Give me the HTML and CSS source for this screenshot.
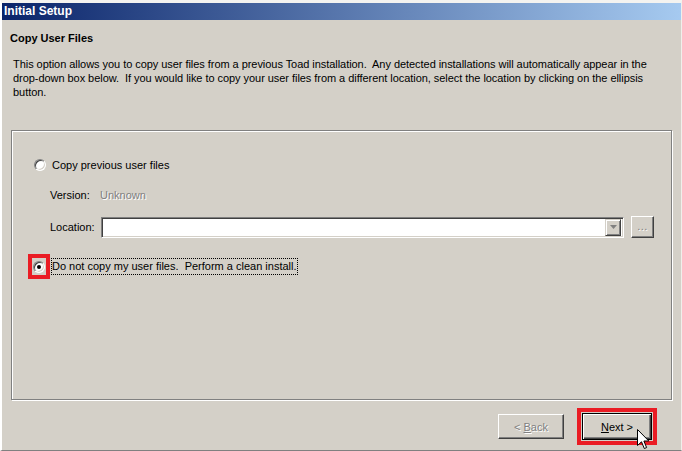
FILE: index.html
```html
<!DOCTYPE html>
<html>
<head>
<meta charset="utf-8">
<title>Initial Setup</title>
<link rel="stylesheet" href="styles.css">
</head>
<body>
<div class="window">
  <div class="titlebar">Initial Setup</div>
  <div class="heading">Copy User Files</div>
  <p class="desc">This option allows you to copy user files from a previous Toad installation.&nbsp; Any detected installations will automatically appear in the<br>drop-down box below.&nbsp; If you would like to copy your user files from a different location, select the location by clicking on the ellipsis<br>button.</p>
  <div class="group">
    <div class="radio-row first">
      <span class="radio"></span>
      <span class="radio-label">Copy previous user files</span>
    </div>
    <div class="field-row version">
      <span class="field-label">Version:</span>
      <span class="disabled-text">Unknown</span>
    </div>
    <div class="field-row location">
      <span class="field-label">Location:</span>
      <div class="combo">
        <div class="combo-btn">
          <svg width="7" height="4" viewBox="0 0 7 4"><path d="M0 0H7L3.5 4Z" fill="#808080"/></svg>
        </div>
      </div>
      <div class="ellipsis-btn">...</div>
    </div>
    <div class="radio-row second">
      <div class="mark-box"><span class="radio checked"><span class="dot"></span></span></div>
      <span class="radio-label focus">Do not copy my user files.&nbsp; Perform a clean install.</span>
    </div>
  </div>
  <div class="buttons">
    <div class="btn disabled"><span class="disabled-text">&lt; <u>B</u>ack</span></div>
    <div class="mark-wrap">
      <div class="btn default"><span><u>N</u>ext &gt;</span></div>
      <svg class="cursor" width="13" height="21" viewBox="0 0 13 21"><path d="M0.5 0.5V16.5L4.5 12.8L7.3 19.5L9.6 18.6L6.9 12H11.8Z" fill="#fff" stroke="#000" stroke-width="1" stroke-linejoin="miter"/></svg>
    </div>
  </div>
</div>
</body>
</html>
```
FILE: styles.css
```css
html, body {
  margin: 0;
  padding: 0;
  background: #d4d0c8;
}
body {
  font-family: "Liberation Sans", Arial, sans-serif;
  font-size: 11px;
  color: #000;
}
.window {
  width: 682px;
  height: 451px;
  box-sizing: border-box;
  border-top: 3px solid #f4f3f0;
  border-left: 2px solid #ffffff;
  border-right: 1px solid #f0efeb;
  border-bottom: 1px solid #808080;
  background: #d4d0c8;
  overflow: hidden;
}
.titlebar {
  height: 17px;
  line-height: 17px;
  padding-left: 2px;
  background: linear-gradient(to right, #0a246a, #a6caf0);
  color: #fff;
  font-weight: bold;
  font-size: 12px;
}
.heading {
  margin: 11px 0 0 8px;
  height: 14px;
  line-height: 14px;
  font-weight: bold;
  font-size: 11px;
}
.desc {
  margin: 12px 0 0 11px;
  line-height: 14px;
  white-space: nowrap;
  letter-spacing: -0.05px;
}
.group {
  margin: 31px 0 0 9px;
  width: 661px;
  height: 270px;
  box-sizing: border-box;
  border: 1px solid #808080;
  box-shadow: 1px 1px 0 #fff, inset 1px 1px 0 #fff;
  padding-top: 27px;
}
.radio-row {
  display: flex;
  align-items: center;
}
.radio-row.first {
  height: 14px;
  padding-left: 22px;
}
.radio-row.first .radio-label {
  margin-left: 6px;
}
.radio {
  position: relative;
  display: block;
  width: 12px;
  height: 12px;
  box-sizing: border-box;
  border-radius: 50%;
  background: #fff;
  border: 1px solid;
  border-color: #808080 #ffffff #ffffff #808080;
  box-shadow: inset 1px 1px 0 #404040, inset -1px -1px 0 #d4d0c8;
}
.dot {
  position: absolute;
  left: 3px;
  top: 3px;
  width: 4px;
  height: 4px;
  border-radius: 50%;
  background: #000;
}
.field-row {
  display: flex;
  align-items: center;
  padding-left: 38px;
}
.field-row.version {
  height: 14px;
  margin-top: 16px;
}
.field-row.location {
  height: 22px;
  margin-top: 14px;
}
.field-label {
  width: 50px;
  flex: none;
}
.disabled-text {
  color: #808080;
  text-shadow: 1px 1px 0 #fff;
}
.combo {
  display: flex;
  justify-content: flex-end;
  align-items: center;
  width: 523px;
  height: 21px;
  box-sizing: border-box;
  margin-left: 1px;
  background: #fff;
  border: 1px solid;
  border-color: #808080 #ffffff #ffffff #808080;
  box-shadow: inset 1px 1px 0 #404040, inset -1px -1px 0 #d4d0c8;
  padding-right: 2px;
}
.combo-btn {
  display: flex;
  align-items: center;
  justify-content: center;
  width: 16px;
  height: 17px;
  box-sizing: border-box;
  background: #d4d0c8;
  border: 1px solid;
  border-color: #d4d0c8 #404040 #404040 #d4d0c8;
  box-shadow: inset 1px 1px 0 #fff, inset -1px -1px 0 #808080;
}
.ellipsis-btn {
  margin-left: 7px;
  width: 23px;
  height: 22px;
  box-sizing: border-box;
  display: flex;
  align-items: center;
  justify-content: center;
  color: #808080;
  text-shadow: 1px 1px 0 #fff;
  border: 1px solid;
  border-color: #ffffff #404040 #404040 #ffffff;
  box-shadow: inset -1px -1px 0 #808080;
  letter-spacing: 0.5px;
  padding-bottom: 2px;
}
.radio-row.second {
  margin-top: 16px;
  height: 25px;
  padding-left: 16px;
}
.mark-box {
  width: 22px;
  height: 25px;
  box-sizing: border-box;
  border: 4px solid #ea1c24;
  display: flex;
  align-items: center;
  justify-content: center;
}
.radio-label.focus {
  margin-left: 1px;
  padding: 1px 1px 2px 1px;
  outline: 1px dotted #000;
  outline-offset: -1px;
  line-height: 14px;
}
.buttons {
  display: flex;
  justify-content: flex-end;
  align-items: center;
  margin-top: 8px;
  padding-right: 24px;
  height: 37px;
}
.btn {
  box-sizing: border-box;
  display: flex;
  align-items: center;
  justify-content: center;
  background: #d4d0c8;
}
.btn.disabled {
  width: 66px;
  height: 25px;
  border: 1px solid;
  border-color: #ffffff #404040 #404040 #ffffff;
  box-shadow: inset -1px -1px 0 #808080;
  margin-right: 13px;
}
.mark-wrap {
  position: relative;
  border: 4px solid #ea1c24;
  padding: 1px;
}
.btn.default {
  width: 70px;
  height: 27px;
  border: 1px solid #000;
  box-shadow: inset 1px 1px 0 #fff, inset -1px -1px 0 #404040, inset -2px -2px 0 #808080;
}
.cursor {
  position: absolute;
  left: 56px;
  top: 17px;
}
```
